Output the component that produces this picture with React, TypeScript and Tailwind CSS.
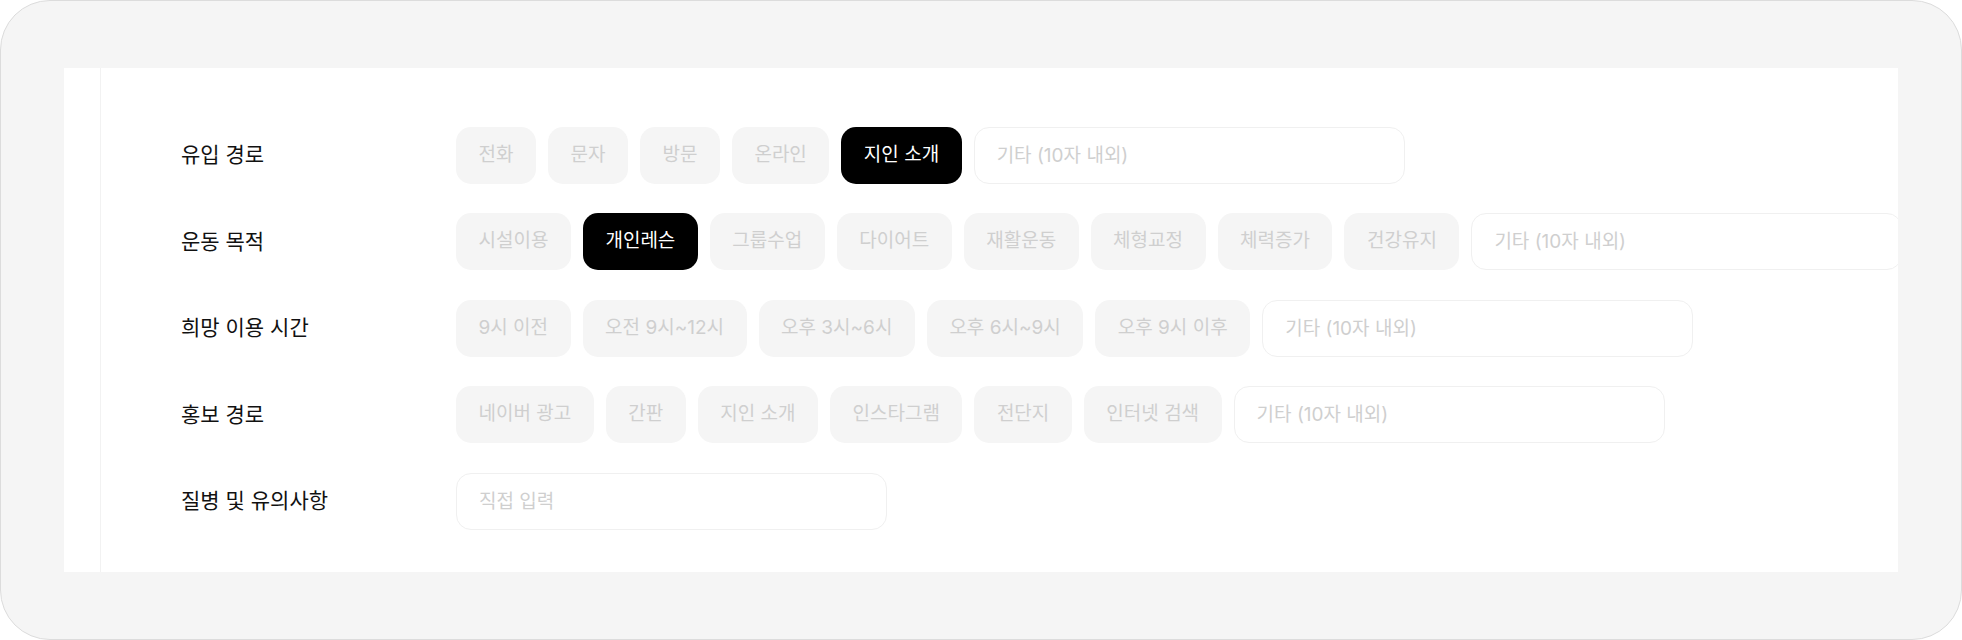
import React from "react";

interface Row {
  label: string;
  options: string[];
  selected?: string;
  placeholder: string;
}

const ROWS: Row[] = [
  {
    label: "유입 경로",
    options: ["전화", "문자", "방문", "온라인", "지인 소개"],
    selected: "지인 소개",
    placeholder: "기타 (10자 내외)",
  },
  {
    label: "운동 목적",
    options: ["시설이용", "개인레슨", "그룹수업", "다이어트", "재활운동", "체형교정", "체력증가", "건강유지"],
    selected: "개인레슨",
    placeholder: "기타 (10자 내외)",
  },
  {
    label: "희망 이용 시간",
    options: ["9시 이전", "오전 9시~12시", "오후 3시~6시", "오후 6시~9시", "오후 9시 이후"],
    placeholder: "기타 (10자 내외)",
  },
  {
    label: "홍보 경로",
    options: ["네이버 광고", "간판", "지인 소개", "인스타그램", "전단지", "인터넷 검색"],
    placeholder: "기타 (10자 내외)",
  },
  {
    label: "질병 및 유의사항",
    options: [],
    placeholder: "직접 입력",
  },
];

const Chip: React.FC<{ text: string; active?: boolean }> = ({ text, active }) => (
  <button
    className={`h-[57px] shrink-0 px-[22.5px] rounded-[15px] text-[19px] whitespace-nowrap ${
      active ? "bg-black text-white" : "bg-[#f5f5f5] text-[#cfcfcf]"
    }`}
  >
    {text}
  </button>
);

export default function App() {
  return (
    <div className="w-[1962px] h-[640px] bg-[#f5f5f5] border border-[#dcdcdc] rounded-[50px] px-[63px] py-[67px] font-['Inter','Noto_Sans_CJK_KR',sans-serif]">
      <div className="h-full bg-white flex overflow-hidden">
        <div className="w-[36px] shrink-0" />
        <div className="flex-1 min-w-0 border-l border-[#f2f2f2] pl-[80px] pt-[58.5px] flex flex-col gap-[29.5px] overflow-hidden">
          {ROWS.map((row) => (
            <div key={row.label} className="flex items-center">
              <div className="w-[275px] shrink-0 text-[21px] font-normal text-[#111111]">
                {row.label}
              </div>
              <div className="flex gap-3">
                {row.options.map((opt) => (
                  <Chip key={opt} text={opt} active={opt === row.selected} />
                ))}
                <input
                  readOnly
                  placeholder={row.placeholder}
                  className="w-[431px] h-[57px] shrink-0 border border-[#f0f0f0] rounded-[15px] px-[22px] text-[19px] bg-white outline-none placeholder:text-[#cfcfcf]"
                />
              </div>
            </div>
          ))}
        </div>
      </div>
    </div>
  );
}
